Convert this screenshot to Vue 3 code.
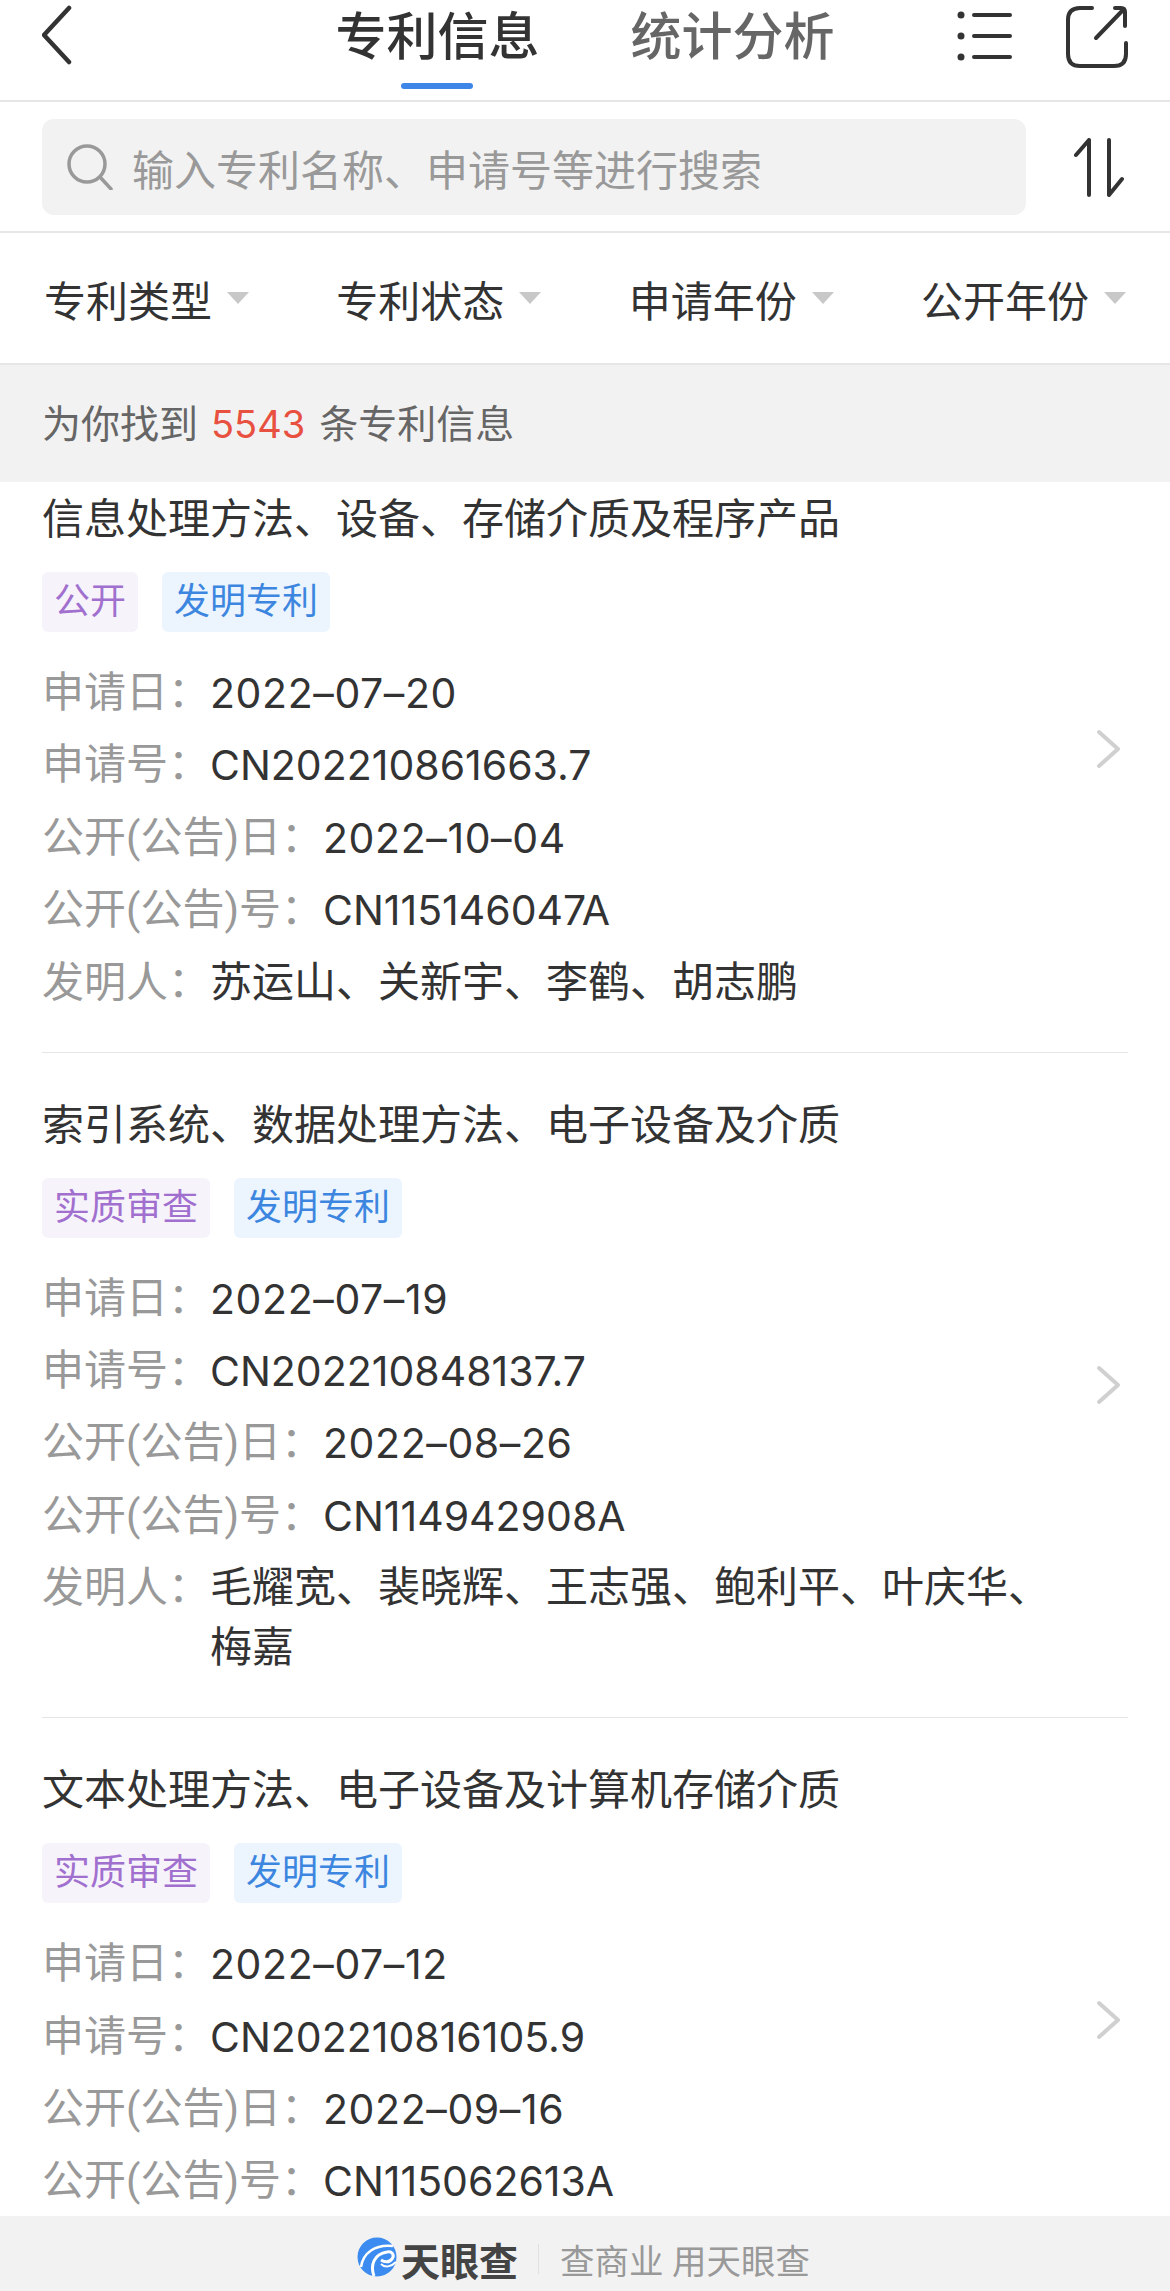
<script setup>
const filters = ['专利类型', '专利状态', '申请年份', '公开年份']
const patents = [
  {
    title: '信息处理方法、设备、存储介质及程序产品',
    status: '公开',
    appDate: '2022–07–20',
    appNo: 'CN202210861663.7',
    pubDate: '2022–10–04',
    pubNo: 'CN115146047A',
    inventors: '苏运山、关新宇、李鹤、胡志鹏'
  },
  {
    title: '索引系统、数据处理方法、电子设备及介质',
    status: '实质审查',
    appDate: '2022–07–19',
    appNo: 'CN202210848137.7',
    pubDate: '2022–08–26',
    pubNo: 'CN114942908A',
    inventors: '毛耀宽、裴晓辉、王志强、鲍利平、叶庆华、梅嘉'
  },
  {
    title: '文本处理方法、电子设备及计算机存储介质',
    status: '实质审查',
    appDate: '2022–07–12',
    appNo: 'CN202210816105.9',
    pubDate: '2022–09–16',
    pubNo: 'CN115062613A',
    inventors: ''
  }
]
</script>

<template>
  <div class="page">
    <header class="topbar">
      <div class="top-left">
        <svg class="ic-back" width="40" height="70" viewBox="0 0 40 70">
          <path d="M27 8 L2 35 L27 62" />
        </svg>
      </div>
      <nav class="tabs">
        <div class="tab active">专利信息</div>
        <div class="tab">统计分析</div>
      </nav>
      <div class="top-right">
        <svg class="ic-line" width="56" height="56" viewBox="0 0 56 56">
          <circle class="dot" cx="4" cy="7" r="3.5" />
          <circle class="dot" cx="4" cy="28" r="3.5" />
          <circle class="dot" cx="4" cy="49" r="3.5" />
          <path d="M17 7 H53 M17 28 H53 M17 49 H53" />
        </svg>
        <svg class="ic-line" width="64" height="64" viewBox="0 0 64 64">
          <path d="M27 4 H15 Q3 4 3 16 V50 Q3 62 15 62 H49 Q61 62 61 50 V39" />
          <path d="M31 34 L58 6 M50 4 H56 Q60 4 60 8 V22" />
        </svg>
      </div>
    </header>

    <section class="searchbar">
      <div class="search-box">
        <svg class="ic-search" width="46" height="46" viewBox="0 0 46 46">
          <circle cx="20" cy="20" r="18" />
          <path d="M33 33 L44 45" />
        </svg>
        <span>输入专利名称、申请号等进行搜索</span>
      </div>
      <svg class="ic-line" width="50" height="60" viewBox="0 0 50 60">
        <path d="M15 3 V58 M15 3 L2 18 M35 3 V58 M35 58 L48 42" />
      </svg>
    </section>

    <section class="filters">
      <div v-for="f in filters" :key="f" class="filter">
        <span>{{ f }}</span>
        <i class="caret"></i>
      </div>
    </section>

    <section class="countbar">
      <p class="count-text">为你找到<em>5543</em>条专利信息</p>
    </section>

    <main class="list">
      <div class="list-inner">
        <article v-for="p in patents" :key="p.appNo" class="item">
          <h2 class="title">{{ p.title }}</h2>
          <div class="tags">
            <span class="tag purple">{{ p.status }}</span>
            <span class="tag blue">发明专利</span>
          </div>
          <div class="rows">
            <div class="row"><span class="label">申请日：</span><span class="value num date">{{ p.appDate }}</span></div>
            <div class="row"><span class="label">申请号：</span><span class="value num">{{ p.appNo }}</span></div>
            <div class="row"><span class="label">公开(公告)日：</span><span class="value num date">{{ p.pubDate }}</span></div>
            <div class="row"><span class="label">公开(公告)号：</span><span class="value num">{{ p.pubNo }}</span></div>
            <div class="row">
              <template v-if="p.inventors">
                <span class="label">发明人：</span><span class="value">{{ p.inventors }}</span>
              </template>
            </div>
          </div>
          <svg class="chevron" width="26" height="40" viewBox="0 0 26 40">
            <path d="M3 3 L22 20 L3 37" />
          </svg>
        </article>
      </div>
    </main>

    <footer class="footer">
      <svg class="logo" width="40" height="40" viewBox="0 0 40 40">
        <circle cx="20" cy="20" r="19.5" fill="#3b8bf0" />
        <path d="M4 30 C6 16 18 7 36 9" fill="none" stroke="#fff" stroke-width="2.5" />
        <path d="M17 39 C13 28 17 17 30 15 C35 14 38 18 35 22 C32 26 27 25 24 23" fill="none" stroke="#fff" stroke-width="3" />
        <path d="M24 27 C28 31 34 30 39 25" fill="none" stroke="#fff" stroke-width="2" />
      </svg>
      <span class="brand">天眼查</span>
      <i class="foot-sep"></i>
      <span class="slogan">查商业 用天眼查</span>
    </footer>
  </div>
</template>

<style scoped>
.page {
  width: 1170px;
  height: 2291px;
  display: flex;
  flex-direction: column;
  overflow: hidden;
  background: #fff;
  color: #333;
  font-family: Roboto, "Noto Sans CJK SC", sans-serif;
}
.ic-line {
  fill: none;
  stroke: #333;
  stroke-width: 4;
  stroke-linecap: round;
  stroke-linejoin: round;
  flex: none;
}
.ic-line .dot {
  fill: #333;
  stroke: none;
}
.topbar {
  height: 102px;
  flex: none;
  box-sizing: border-box;
  border-bottom: 2px solid #e6e6e6;
  display: grid;
  grid-template-columns: 1fr auto 1fr;
}
.top-left {
  padding: 0 0 0 42px;
  display: flex;
  align-items: flex-start;
}
.ic-back {
  fill: none;
  stroke: #333;
  stroke-width: 4.5;
  stroke-linecap: round;
  stroke-linejoin: round;
}
.tabs {
  display: flex;
  gap: 91px;
  padding-top: 3px;
}
.tab {
  position: relative;
  font-size: 51px;
  line-height: 70px;
  font-weight: 500;
  color: #666;
}
.tab.active {
  color: #333;
}
.tab.active::after {
  content: "";
  position: absolute;
  left: 66px;
  top: 80px;
  width: 72px;
  height: 6px;
  border-radius: 3px;
  background: #3d86e8;
}
.top-right {
  display: flex;
  justify-content: flex-end;
  align-items: flex-start;
  gap: 52px;
  padding: 4px 41px 0 0;
}
.top-right .ic-line:first-child {
  margin-top: 4px;
}
.searchbar {
  height: 131px;
  flex: none;
  box-sizing: border-box;
  border-bottom: 2px solid #e6e6e6;
  padding: 17px 46px 16px 42px;
  display: flex;
  justify-content: space-between;
  align-items: center;
}
.search-box {
  width: 984px;
  height: 96px;
  box-sizing: border-box;
  background: #f2f2f2;
  border-radius: 12px;
  display: flex;
  align-items: center;
  gap: 19px;
  padding-left: 25px;
  font-size: 42px;
  color: #999;
}
.ic-search {
  fill: none;
  stroke: #999;
  stroke-width: 3.5;
  stroke-linecap: round;
  flex: none;
}
.filters {
  height: 132px;
  flex: none;
  box-sizing: border-box;
  border-bottom: 2px solid #e6e6e6;
  padding: 0 44px;
  display: flex;
  justify-content: space-between;
  align-items: center;
}
.filter {
  display: flex;
  align-items: center;
  gap: 15px;
  font-size: 42px;
  color: #333;
}
.caret {
  width: 0;
  height: 0;
  border-left: 11px solid transparent;
  border-right: 11px solid transparent;
  border-top: 12px solid #c8c8c8;
}
.countbar {
  height: 117px;
  flex: none;
  background: #f2f2f2;
  padding-left: 42px;
  display: flex;
  align-items: center;
}
.count-text {
  margin: -5px 0 0;
  font-size: 39px;
  color: #666;
}
.count-text em {
  font-family: Inter, Roboto, sans-serif;
  font-size: 38px;
  font-style: normal;
  color: #e8503f;
  margin: 0 14px 0 13px;
}
.list {
  flex: 1;
  min-height: 0;
  overflow: hidden;
}
.list-inner {
  margin-top: -35px;
}
.item {
  position: relative;
  margin: 0 42px;
  padding: 43px 0 39px;
  border-top: 1px solid #e6e6e6;
}
.item:first-child {
  border-top: 0;
}
.title {
  margin: 0;
  font-size: 42px;
  line-height: 60px;
  font-weight: 400;
  color: #333;
}
.tags {
  display: flex;
  gap: 24px;
  margin-top: 22px;
}
.tag {
  height: 60px;
  line-height: 60px;
  padding: 0 12px;
  border-radius: 6px;
  font-size: 36px;
}
.tag.purple {
  background: #f6f3fb;
  color: #a170cf;
}
.tag.blue {
  background: #ecf5fe;
  color: #3d86e0;
}
.rows {
  margin-top: 31px;
  display: flex;
  flex-direction: column;
  gap: 12.4px;
}
.row {
  display: flex;
  font-size: 42px;
  line-height: 60px;
  min-height: 60px;
}
.label {
  color: #999;
  flex: none;
}
.value {
  color: #333;
  width: 860px;
}
.value.num {
  font-family: Inter, Roboto, sans-serif;
  font-size: 41px;
}
.value.date {
  letter-spacing: 0.6px;
}
.chevron {
  position: absolute;
  right: 6px;
  top: 50%;
  margin-top: -20px;
  fill: none;
  stroke: #d0d0d0;
  stroke-width: 4;
  stroke-linecap: round;
  stroke-linejoin: round;
}
.footer {
  height: 75px;
  flex: none;
  box-sizing: border-box;
  background: #f2f2f2;
  display: flex;
  align-items: center;
  padding: 10px 0 0 357px;
}
.logo {
  flex: none;
  margin-top: -4px;
}
.brand {
  margin-left: 4px;
  font-size: 39px;
  font-weight: 700;
  color: #444;
}
.foot-sep {
  width: 1px;
  height: 30px;
  background: #e0e0e0;
  margin: 0 21px 0 20px;
}
.slogan {
  font-size: 34.5px;
  color: #999;
  white-space: pre;
}
</style>
